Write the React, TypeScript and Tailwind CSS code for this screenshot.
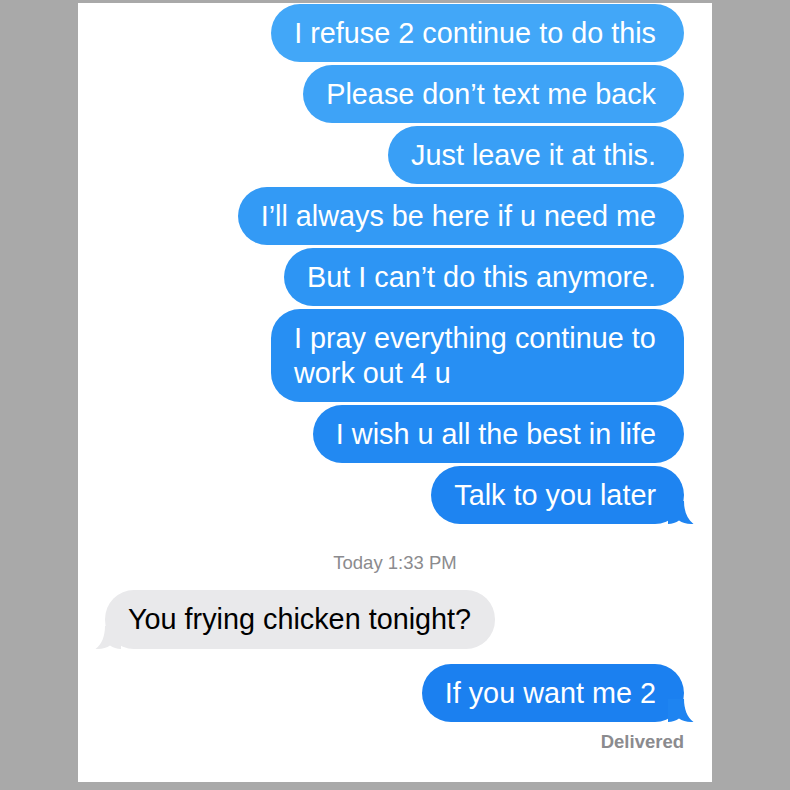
import React from "react";

type Msg = { text: string; color: string; tail?: boolean; width?: string };

const sent: Msg[] = [
  { text: "I refuse 2 continue to do this", color: "bg-[#42a7f8]" },
  { text: "Please don’t text me back", color: "bg-[#3ea3f7]" },
  { text: "Just leave it at this.", color: "bg-[#399ff6]" },
  { text: "I’ll always be here if u need me", color: "bg-[#339af5]" },
  { text: "But I can’t do this anymore.", color: "bg-[#2d95f4]" },
  { text: "I pray everything continue to work out 4 u", color: "bg-[#278ff3]", width: "w-[413px]" },
  { text: "I wish u all the best in life", color: "bg-[#2289f2]" },
  { text: "Talk to you later", color: "bg-[#1e84f1]", tail: true },
];

function Tail({ fill, left }: { fill: string; left?: boolean }) {
  return (
    <svg
      width="26"
      height="24"
      viewBox="0 0 26 24"
      className={left ? "absolute left-[-10px] bottom-[-1px] -scale-x-100" : "absolute right-[-10px] bottom-[-1px]"}
    >
      <path
        d="M0 0 H16 C16 10 19 18 25.5 23 C19.5 23.5 14.5 22 11 19.5 C8 21.5 4 23 0 23 Z"
        fill={fill}
      />
    </svg>
  );
}

function Blue({ m }: { m: Msg }) {
  return (
    <div className={`relative max-w-[450px] rounded-[29px] pl-[23px] pr-[28px] py-[11.5px] text-white ${m.color} ${m.width ?? ""}`}>
      <span className="block text-[28.8px] leading-[35px]">{m.text}</span>
      {m.tail && <Tail fill="#1e84f1" />}
    </div>
  );
}

export default function App() {
  return (
    <div className="w-[790px] h-[790px] bg-[#a9a9a9] pt-[3px] font-['Liberation_Sans',Arial,sans-serif]">
      <div className="ml-[78px] w-[634px] h-[779px] bg-white flex flex-col">
        {/* sent block */}
        <div className="flex flex-col items-end gap-[3px] pr-[28px] pt-[1px]">
          {sent.map((m) => (
            <Blue key={m.text} m={m} />
          ))}
        </div>

        <div className="mt-[28px] text-center text-[18.5px] leading-[22px] text-[#8b8b8e]">
          Today 1:33 PM
        </div>

        {/* received */}
        <div className="mt-[16px] pl-[27px] flex">
          <div className="relative rounded-[29px] bg-[#e9e9eb] pl-[23px] pr-[24px] py-[12px] text-black">
            <span className="block text-[28.8px] leading-[35px]">You frying chicken tonight?</span>
            <Tail fill="#e9e9eb" left />
          </div>
        </div>

        <div className="mt-[15px] pr-[28px] flex flex-col items-end">
          <Blue m={{ text: "If you want me 2", color: "bg-[#1b80f0]", tail: true }} />
          <div className="mt-[9px] text-[18.5px] leading-[22px] font-semibold text-[#8b8b8e]">Delivered</div>
        </div>
      </div>
    </div>
  );
}
